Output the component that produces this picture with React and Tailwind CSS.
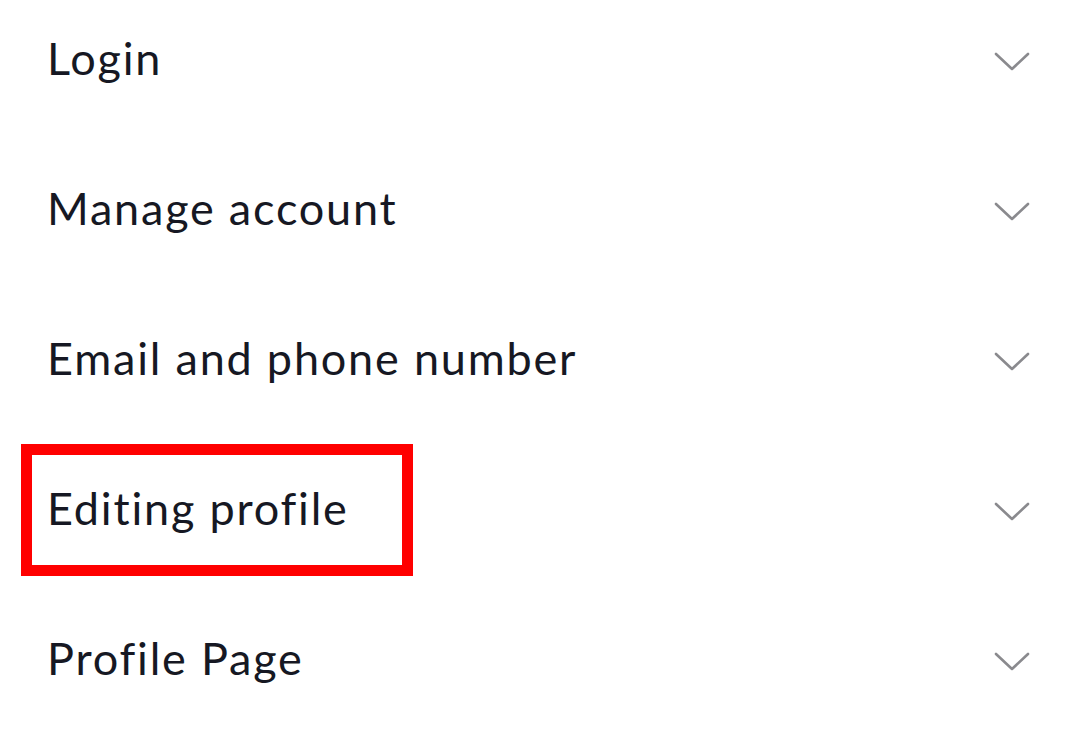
import React from "react";

const items = [
  "Login",
  "Manage account",
  "Email and phone number",
  "Editing profile",
  "Profile Page",
];

function Chevron() {
  return (
    <svg width="36" height="20" viewBox="0 0 36 20" fill="none" className="shrink-0 relative top-[2px] right-[-2px]">
      <path d="M2 2 L18 17 L34 2" stroke="#8a8a8e" strokeWidth="2.6" strokeLinecap="round" strokeLinejoin="round" />
    </svg>
  );
}

export default function App() {
  return (
    <div className="w-[1080px] h-[740px] bg-white overflow-hidden" style={{ fontFamily: "Lato, 'Noto Sans', sans-serif" }}>
      <ul className="flex flex-col gap-[30px]">
        {items.map((label, i) => (
          <li key={label} className="h-[120px] flex items-center justify-between pl-[47px] pr-[52px]">
            <div className="relative">
              {i === 3 && (
                <div className="absolute left-[-26px] top-[-6px] w-[392px] h-[132px] border-[11px] border-[#ff0000] pointer-events-none" />
              )}
              <span className="relative top-[-2px] text-[45px] text-[#161823] tracking-[1.8px] leading-[120px]">{label}</span>
            </div>
            <Chevron />
          </li>
        ))}
      </ul>
    </div>
  );
}
